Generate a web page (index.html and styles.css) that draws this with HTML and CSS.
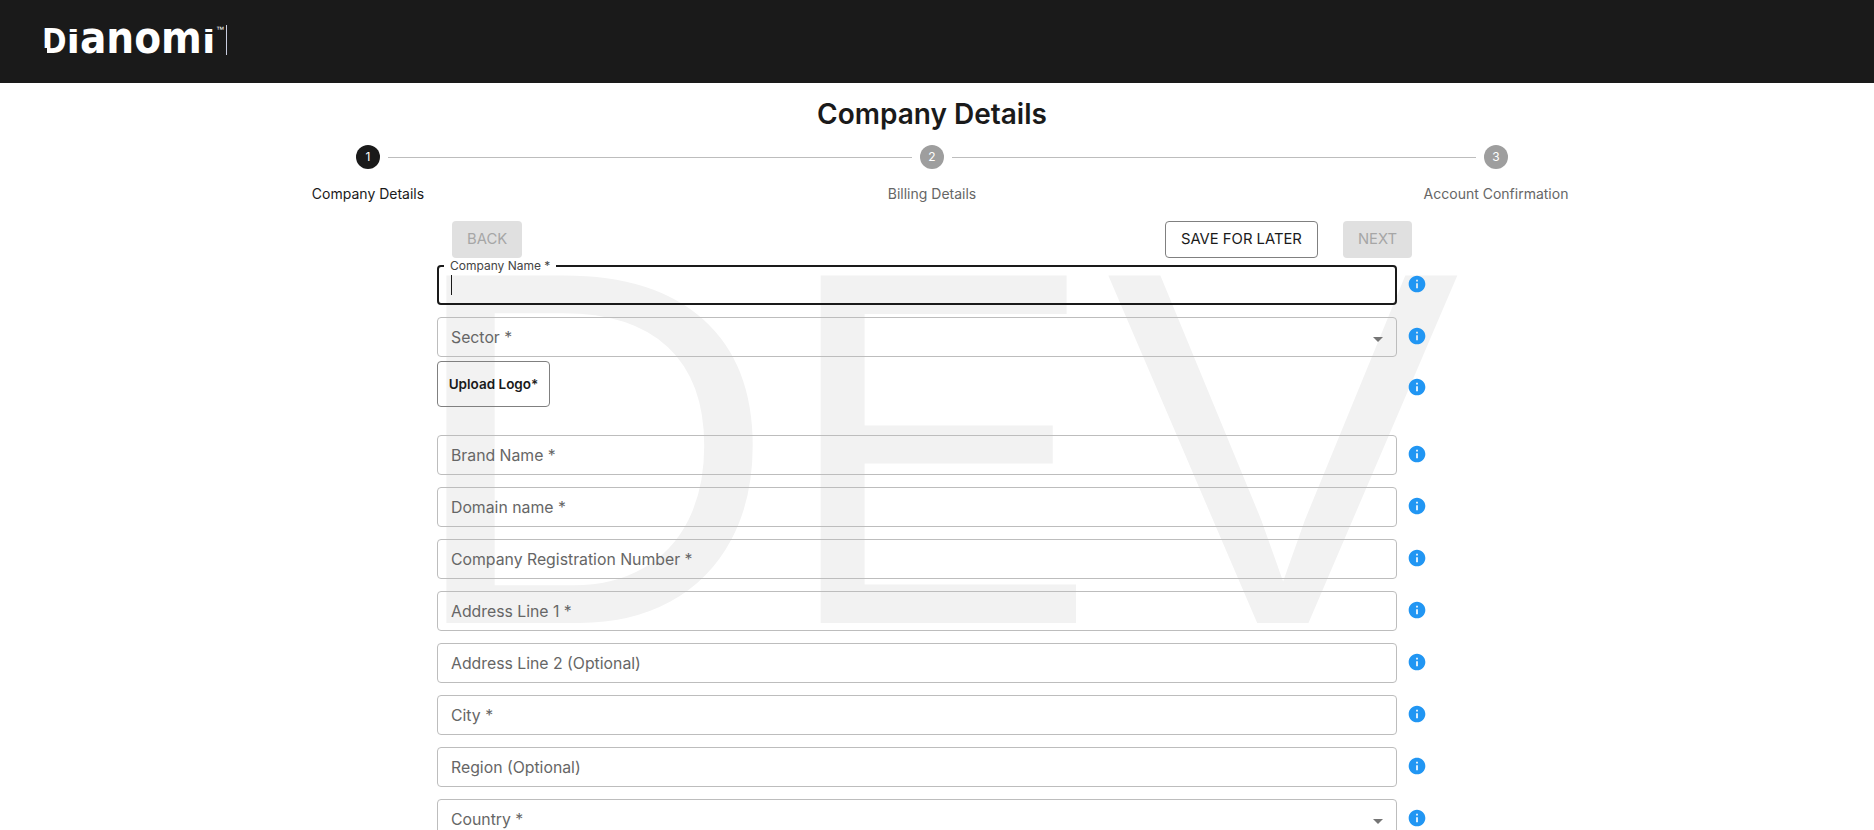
FILE: index.html
```html
<!DOCTYPE html>
<html lang="en">
<head>
<meta charset="utf-8">
<title>Company Details</title>
<link rel="stylesheet" href="styles.css">
</head>
<body>
<header class="topbar">
  <svg class="logo" width="240" height="83" viewBox="0 0 240 83" role="img" aria-label="Dianomi">
    <defs><clipPath id="logo-clip"><rect x="36" y="28" width="180" height="26"/></clipPath></defs>
    <g clip-path="url(#logo-clip)">
      <g transform="translate(42 53) scale(.87 1)">
        <text class="logo-text"><tspan class="logo-d">D</tspan>ianomi</text>
      </g>
    </g>
    <rect class="logo-cut" x="41" y="48" width="6" height="6"/>
    <rect class="logo-cut" x="68" y="32" width="11" height="2"/>
    <rect class="logo-cut" x="203" y="32" width="12" height="2"/>
    <text class="logo-tm" x="216" y="32">™</text>
    <rect class="logo-sep" x="226" y="25" width="1" height="30"/>
  </svg>
</header>
<div class="watermark" aria-hidden="true"><span class="wm-d">D</span><span class="wm-e">E</span><span class="wm-v">V</span></div>
<main class="page">
  <h1 class="title">Company Details</h1>
  <ol class="steps">
    <li class="step step-active"><span class="step-dot">1</span><span class="step-label">Company Details</span></li>
    <li class="step"><span class="step-dot">2</span><span class="step-label">Billing Details</span></li>
    <li class="step"><span class="step-dot">3</span><span class="step-label">Account Confirmation</span></li>
  </ol>
  <div class="form">
    <div class="actions">
      <button class="btn btn-disabled">BACK</button>
      <button class="btn btn-outline btn-save">SAVE FOR LATER</button>
      <button class="btn btn-disabled">NEXT</button>
    </div>
    <div class="row">
      <div class="field field-focus"><span class="float-label">Company Name *</span><span class="caret"></span></div>
      <svg class="info" viewBox="0 0 24 24"><path d="M12 2C6.48 2 2 6.48 2 12s4.48 10 10 10 10-4.48 10-10S17.52 2 12 2zm1 15h-2v-6h2v6zm0-8h-2V7h2v2z"/></svg>
    </div>
    <div class="row">
      <div class="field field-select">Sector *</div>
      <svg class="info" viewBox="0 0 24 24"><path d="M12 2C6.48 2 2 6.48 2 12s4.48 10 10 10 10-4.48 10-10S17.52 2 12 2zm1 15h-2v-6h2v6zm0-8h-2V7h2v2z"/></svg>
    </div>
    <div class="row row-upload">
      <div class="upload-cell"><button class="btn-upload">Upload Logo*</button></div>
      <svg class="info" viewBox="0 0 24 24"><path d="M12 2C6.48 2 2 6.48 2 12s4.48 10 10 10 10-4.48 10-10S17.52 2 12 2zm1 15h-2v-6h2v6zm0-8h-2V7h2v2z"/></svg>
    </div>
    <div class="row">
      <div class="field">Brand Name *</div>
      <svg class="info" viewBox="0 0 24 24"><path d="M12 2C6.48 2 2 6.48 2 12s4.48 10 10 10 10-4.48 10-10S17.52 2 12 2zm1 15h-2v-6h2v6zm0-8h-2V7h2v2z"/></svg>
    </div>
    <div class="row">
      <div class="field">Domain name *</div>
      <svg class="info" viewBox="0 0 24 24"><path d="M12 2C6.48 2 2 6.48 2 12s4.48 10 10 10 10-4.48 10-10S17.52 2 12 2zm1 15h-2v-6h2v6zm0-8h-2V7h2v2z"/></svg>
    </div>
    <div class="row">
      <div class="field">Company Registration Number *</div>
      <svg class="info" viewBox="0 0 24 24"><path d="M12 2C6.48 2 2 6.48 2 12s4.48 10 10 10 10-4.48 10-10S17.52 2 12 2zm1 15h-2v-6h2v6zm0-8h-2V7h2v2z"/></svg>
    </div>
    <div class="row">
      <div class="field">Address Line 1 *</div>
      <svg class="info" viewBox="0 0 24 24"><path d="M12 2C6.48 2 2 6.48 2 12s4.48 10 10 10 10-4.48 10-10S17.52 2 12 2zm1 15h-2v-6h2v6zm0-8h-2V7h2v2z"/></svg>
    </div>
    <div class="row">
      <div class="field">Address Line 2 (Optional)</div>
      <svg class="info" viewBox="0 0 24 24"><path d="M12 2C6.48 2 2 6.48 2 12s4.48 10 10 10 10-4.48 10-10S17.52 2 12 2zm1 15h-2v-6h2v6zm0-8h-2V7h2v2z"/></svg>
    </div>
    <div class="row">
      <div class="field">City *</div>
      <svg class="info" viewBox="0 0 24 24"><path d="M12 2C6.48 2 2 6.48 2 12s4.48 10 10 10 10-4.48 10-10S17.52 2 12 2zm1 15h-2v-6h2v6zm0-8h-2V7h2v2z"/></svg>
    </div>
    <div class="row">
      <div class="field">Region (Optional)</div>
      <svg class="info" viewBox="0 0 24 24"><path d="M12 2C6.48 2 2 6.48 2 12s4.48 10 10 10 10-4.48 10-10S17.52 2 12 2zm1 15h-2v-6h2v6zm0-8h-2V7h2v2z"/></svg>
    </div>
    <div class="row">
      <div class="field field-select">Country *</div>
      <svg class="info" viewBox="0 0 24 24"><path d="M12 2C6.48 2 2 6.48 2 12s4.48 10 10 10 10-4.48 10-10S17.52 2 12 2zm1 15h-2v-6h2v6zm0-8h-2V7h2v2z"/></svg>
    </div>
  </div>
</main>
</body>
</html>
```
FILE: styles.css
```css
* { box-sizing: border-box; }
html, body { margin: 0; height: 100%; overflow: hidden; }
body { position: relative; font-family: Inter, "Liberation Sans", sans-serif; color: #1a1a1a; background: #fff; }

.topbar { position: relative; height: 83px; background: #1a1a1a; }
.logo { display: block; }
.logo-text { font-family: "DejaVu Sans", sans-serif; font-weight: 700; font-size: 45px; fill: #fff; }
.logo-d { font-size: 34px; }
.logo-cut { fill: #1a1a1a; }
.logo-tm { font-family: "Liberation Sans", sans-serif; font-size: 8px; fill: #fff; }
.logo-sep { fill: #c9cde0; }

.watermark {
  position: absolute; left: 0; top: 198px; width: 100%; height: 500px;
  font-family: "Liberation Sans", sans-serif; font-size: 505px; line-height: 500px;
  color: #f2f2f2;
}
.watermark span { position: absolute; top: 0; transform-origin: left center; }
.wm-d { left: 404px; transform: scaleX(1.024); }
.wm-e { left: 782px; transform: scaleX(.933); }
.wm-v { left: 1106px; transform: scaleX(1.05); }

.page { position: relative; width: 1864px; }
.title { margin: 0; padding-top: 14px; text-align: center; font-size: 28px; line-height: 34px; font-weight: 600; color: #1a1a1a; }

.steps { list-style: none; margin: 14px 0 0 86px; padding: 0; display: grid; grid-template-columns: repeat(3, 564px); }
.step { position: relative; display: flex; flex-direction: column; align-items: center; }
.step + .step::before { content: ""; position: absolute; top: 12px; left: calc(-50% + 20px); right: calc(50% + 20px); height: 1px; background: #bdbdbd; }
.step-dot { width: 24px; height: 24px; border-radius: 50%; background: #9e9e9e; color: #fff; font-size: 12px; line-height: 24px; text-align: center; }
.step-active .step-dot { background: #1a1a1a; }
.step-label { margin-top: 16px; font-size: 14px; line-height: 18px; color: #666; }
.step-active .step-label { color: #1a1a1a; }

.form { margin: 18px 0 0 437px; width: 1000px; }
.actions { width: 975px; padding-left: 15px; display: flex; gap: 25px; margin-bottom: 7px; }
.btn { height: 37px; padding: 0 15px 2px; border: 0; border-radius: 4px; font-family: Inter, sans-serif; font-size: 14.8px; background: transparent; }
.btn-disabled { background: #e0e0e0; color: #a6a6a6; }
.btn-outline { border: 1px solid #808080; color: #1a1a1a; }
.btn-save { margin-left: auto; }

.row { display: flex; align-items: center; gap: 10px; margin-bottom: 12px; }
.field { position: relative; flex: 0 0 960px; height: 40px; padding: 0 13px; border: 1px solid #bdbdbd; border-radius: 4px; font-size: 15.8px; line-height: 40px; color: #666; }
.field-focus { border: 2px solid #1a1a1a; padding: 0 12px; }
.float-label { position: absolute; left: 5px; top: -8px; padding: 0 6px; background: #fff; font-size: 12px; line-height: 14px; color: #444; }
.caret { position: absolute; left: 12px; top: 8px; width: 1px; height: 20px; background: #1a1a1a; }
.field-select::after { content: ""; position: absolute; right: 13px; top: 19px; border-left: 5px solid transparent; border-right: 5px solid transparent; border-top: 5px solid #757575; }
.info { flex: none; width: 20px; height: 20px; margin-bottom: 3px; fill: #2196f3; }

.row-upload { margin-top: -8px; height: 52px; margin-bottom: 22px; }
.row-upload .info { margin-bottom: 0; }
.upload-cell { flex: 0 0 960px; align-self: flex-start; }
.btn-upload { display: block; width: 113px; height: 46px; padding: 0; border: 1px solid #808080; border-radius: 4px; background: transparent; font-family: Inter, sans-serif; font-size: 13.5px; font-weight: 600; color: #1a1a1a; }
```
